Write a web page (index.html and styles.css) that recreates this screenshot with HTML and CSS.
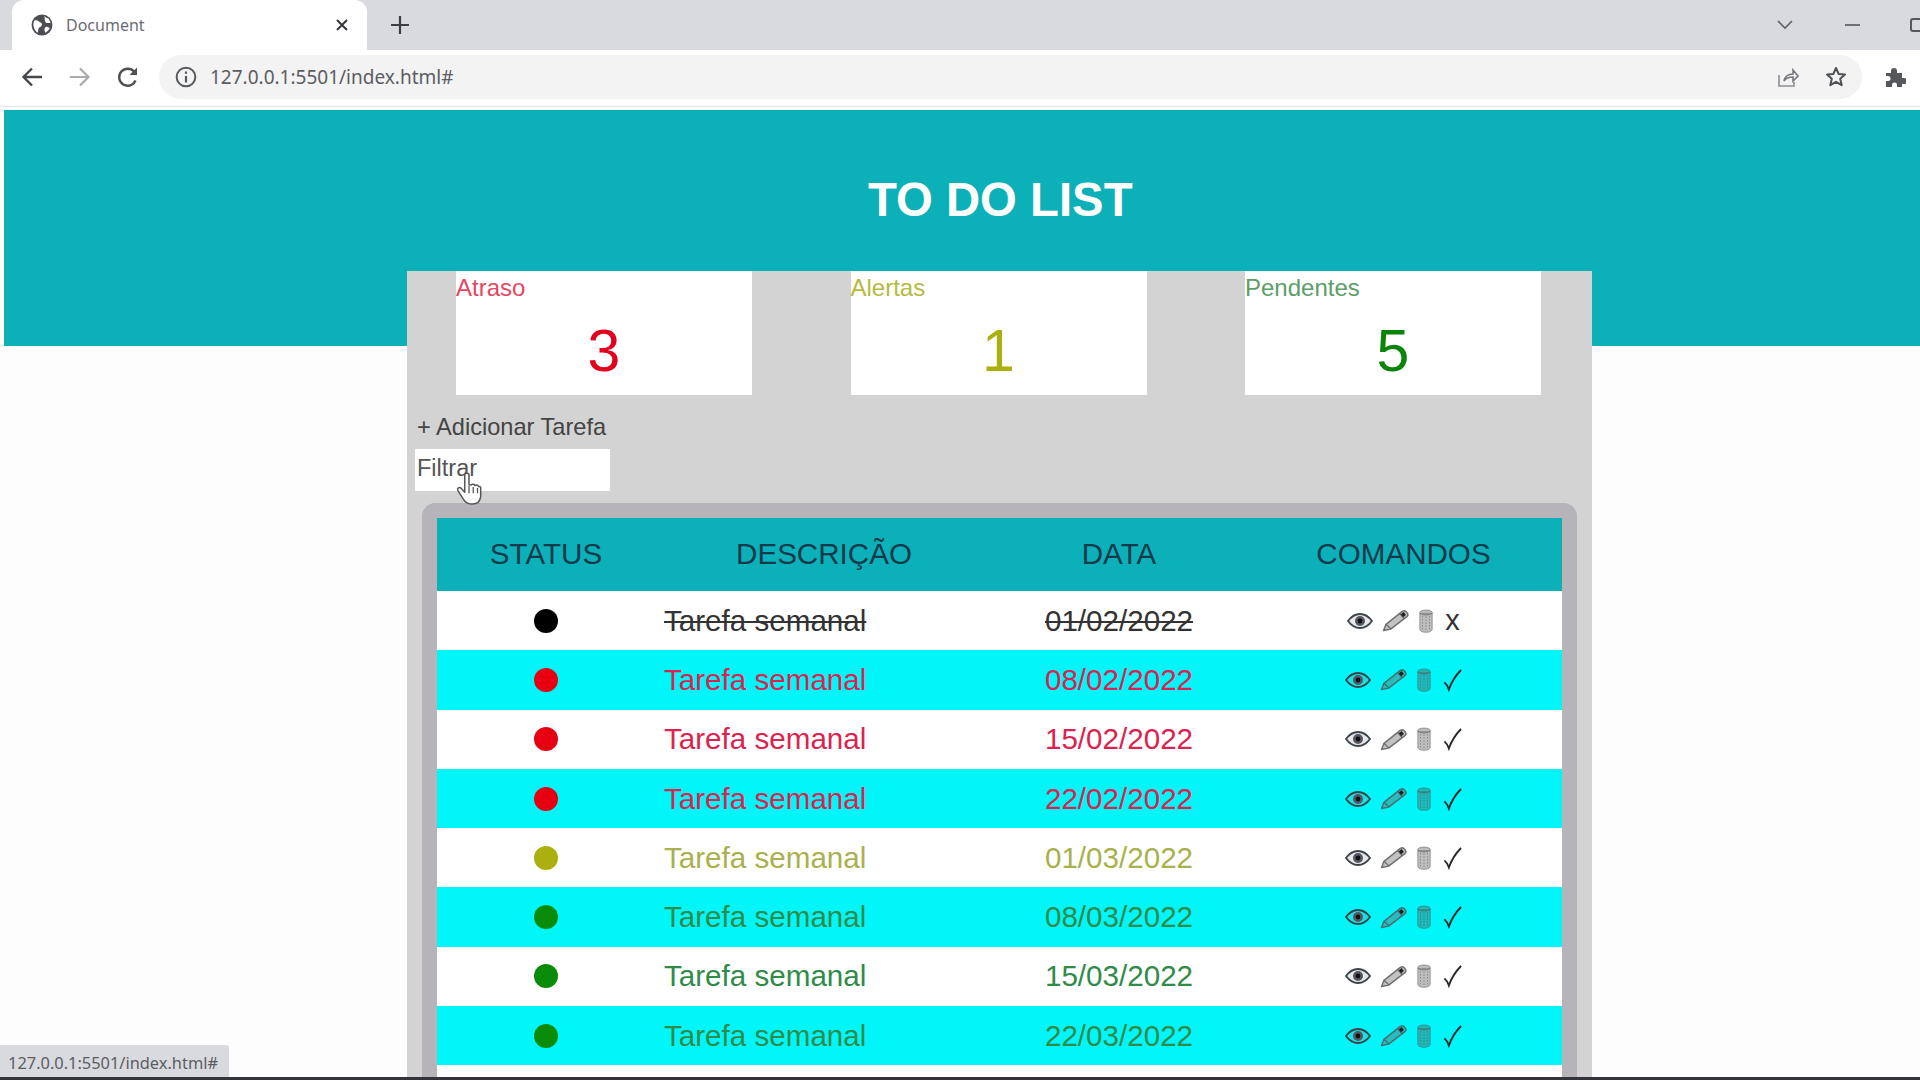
FILE: index.html
```
<!DOCTYPE html>
<html lang="pt-BR">
<head>
<meta charset="utf-8">
<title>Document</title>
<link rel="stylesheet" href="styles.css">
</head>
<body>
<svg class="defs" width="0" height="0" aria-hidden="true">
  <symbol id="i-eye" viewBox="0 0 26 16">
    <path d="M1 8C5 2.500 9 1 13 1s8 1.500 12 7c-4 5.500-8 7-12 7S5 13.500 1 8z" fill="#888" fill-opacity=".2" stroke="#3a4448" stroke-width="1.800"/>
    <circle cx="13" cy="8" r="5" fill="#556"/>
    <circle cx="13" cy="8" r="2.400" fill="#111"/>
  </symbol>
  <symbol id="i-pencil" viewBox="0 0 29 24">
    <path d="M1.500 22.500l2.500-6.500L21 2.500c1.500-1 3-.8 4 .2l1.500 1.800c.8 1.200.5 2.500-.6 3.500L9 21z" fill="#666" fill-opacity=".4" stroke="#555" stroke-opacity=".8" stroke-width="1.500" stroke-linejoin="round"/>
    <path d="M4.500 16.500L9 20.500M18.500 5l4.500 5" stroke="#444" stroke-opacity=".7" stroke-width="1.300" fill="none"/>
    <path d="M19.500 5.500l3-2.300 2.400 3-3 2.300z" fill="#222"/>
  </symbol>
  <symbol id="i-trash" viewBox="0 0 14 24">
    <ellipse cx="7" cy="3.500" rx="6.300" ry="2.500" fill="#555" fill-opacity=".4" stroke="#555" stroke-opacity=".5" stroke-width="1"/>
    <path d="M.8 4v16c0 2 2.500 3.300 6.200 3.300s6.200-1.300 6.200-3.300V4" fill="#555" fill-opacity=".38" stroke="#555" stroke-opacity=".5" stroke-width="1"/>
    <path d="M3.500 7v14M7 7.500V22M10.500 7v14" stroke="#555" stroke-opacity=".5" stroke-width="1" stroke-dasharray="1.500 1.500"/>
  </symbol>
  <symbol id="i-check" viewBox="0 0 20 24">
    <path d="M1.500 14.500c1.800 1.500 3.400 3.800 4.700 7.500C9 14 13.500 7 19 1.500" fill="none" stroke="#2a2a2a" stroke-width="2"/>
  </symbol>
</svg>

<div class="browser">
  <div class="tabstrip">
    <div class="tab">
      <svg class="favicon" viewBox="0 0 20 20"><circle cx="10" cy="10" r="9.500" fill="#4d4d55"/><path d="M3 6c3-1 4 1 6 2s1 3-1 4-1 3-2 5C3 15 1 10 3 6zM12 1.500c1 2 3 2 4 2.500l2 4c-2 0-4 1-5-1s0-3-1-5.500zM13 12c2-1 3 0 4 1-1 2-2 3-4 4-1-2-1-4 0-5z" fill="#fff"/></svg>
      <span class="tab-title">Document</span>
      <svg class="tab-close" viewBox="0 0 12 12"><path d="M1 1l10 10M11 1L1 11" stroke="#33363c" stroke-width="2"/></svg>
    </div>
    <svg class="new-tab" viewBox="0 0 18 18"><path d="M9 0v18M0 9h18" stroke="#3c4043" stroke-width="2.200"/></svg>
    <div class="window-controls">
      <svg class="tab-search" viewBox="0 0 16 10"><path d="M1 1l7 7 7-7" fill="none" stroke="#5f6368" stroke-width="1.600"/></svg>
      <span class="minimize"></span>
      <span class="restore"></span>
    </div>
  </div>
  <div class="toolbar">
    <svg class="nav" viewBox="0 0 24 24"><path d="M22 12H4M12 3.500L3.500 12l8.500 8.500" fill="none" stroke="#45484d" stroke-width="2.400"/></svg>
    <svg class="nav" viewBox="0 0 24 24"><path d="M2 12h18M12 3.500l8.500 8.500-8.500 8.500" fill="none" stroke="#a9abb0" stroke-width="2.200"/></svg>
    <svg class="nav" viewBox="0 0 24 24"><path d="M19.500 15.500A8.500 8.500 0 1 1 18 6.500" fill="none" stroke="#4c4f54" stroke-width="2.400"/><path d="M21 2.500v7.500h-7.500z" fill="#4c4f54"/></svg>
    <div class="omnibox">
      <svg class="info" viewBox="0 0 20 20"><circle cx="10" cy="10" r="8.500" fill="none" stroke="#55585d" stroke-width="1.800"/><path d="M10 9v6M10 5v2" stroke="#55585d" stroke-width="2"/></svg>
      <span class="url">127.0.0.1:5501/index.html#</span>
      <span class="omni-actions">
        <svg class="share" viewBox="0 0 22 22"><path d="M2 9v11h15v-4" fill="none" stroke="#8a8d92" stroke-width="1.600"/><path d="M7 15c1-5 4-7 9-7V4l5 6-5 5v-4c-4 0-7 1-9 4z" fill="none" stroke="#77797e" stroke-width="1.600"/></svg>
        <svg class="star" viewBox="0 0 22 22"><path d="M11 2l2.700 6 6.300.6-4.800 4.200 1.500 6.400L11 15.800l-5.700 3.400 1.500-6.400L2 8.600 8.300 8z" fill="none" stroke="#4d5055" stroke-width="2" stroke-linejoin="round"/></svg>
      </span>
    </div>
    <svg class="puzzle" viewBox="0 0 22 22"><path d="M2 7h5V5a3 3 0 0 1 6 0v2h5v5h2a3 3 0 0 1 0 6h-2v3H13v-2a2.500 2.500 0 0 0-5 0v2H2v-6h2a2.500 2.500 0 0 0 0-5H2z" fill="#55585d"/></svg>
  </div>
</div>

<header class="banner">
  <h1 class="title">TO DO LIST</h1>
</header>

<main class="panel">
  <section class="cards">
    <div class="card late">
      <span class="card-label">Atraso</span>
      <span class="card-value">3</span>
    </div>
    <div class="card alert">
      <span class="card-label">Alertas</span>
      <span class="card-value">1</span>
    </div>
    <div class="card pending">
      <span class="card-label">Pendentes</span>
      <span class="card-value">5</span>
    </div>
  </section>

  <a class="add-task" href="#">+ Adicionar Tarefa</a>
  <div class="filter">
    <span class="filter-text">Filtrar</span>
    <svg class="cursor" viewBox="0 0 24 32"><path d="M8 3c0-2.500 4-2.500 4 0v9l2 .2c1-1 3-.8 3.500.5 1-.8 3-.6 3.500 1 1.200-.4 2.500.4 2 2.500v7c-.5 4-3 7-7.500 7-5 0-7-1.500-9-5l-5-8c-1-2 1.500-3.500 3-2L8 19z" fill="#fff" stroke="#555" stroke-width="1.400" stroke-linejoin="round"/><path d="M12 13v7M16 14v6M20 15v5" stroke="#555" stroke-width="1.200"/></svg>
  </div>

  <div class="table-frame">
    <div class="table">
      <div class="row head">
        <div>STATUS</div>
        <div>DESCRIÇÃO</div>
        <div>DATA</div>
        <div>COMANDOS</div>
      </div>

      <div class="row done">
        <div><span class="dot"></span></div>
        <div class="desc">Tarefa semanal</div>
        <div class="date">01/02/2022</div>
        <div class="cmds"><svg class="eye"><use href="#i-eye"/></svg><svg class="pencil"><use href="#i-pencil"/></svg><svg class="trash"><use href="#i-trash"/></svg><span class="undo">x</span></div>
      </div>
      <div class="row late">
        <div><span class="dot"></span></div>
        <div class="desc">Tarefa semanal</div>
        <div class="date">08/02/2022</div>
        <div class="cmds"><svg class="eye"><use href="#i-eye"/></svg><svg class="pencil"><use href="#i-pencil"/></svg><svg class="trash"><use href="#i-trash"/></svg><svg class="check"><use href="#i-check"/></svg></div>
      </div>
      <div class="row late">
        <div><span class="dot"></span></div>
        <div class="desc">Tarefa semanal</div>
        <div class="date">15/02/2022</div>
        <div class="cmds"><svg class="eye"><use href="#i-eye"/></svg><svg class="pencil"><use href="#i-pencil"/></svg><svg class="trash"><use href="#i-trash"/></svg><svg class="check"><use href="#i-check"/></svg></div>
      </div>
      <div class="row late">
        <div><span class="dot"></span></div>
        <div class="desc">Tarefa semanal</div>
        <div class="date">22/02/2022</div>
        <div class="cmds"><svg class="eye"><use href="#i-eye"/></svg><svg class="pencil"><use href="#i-pencil"/></svg><svg class="trash"><use href="#i-trash"/></svg><svg class="check"><use href="#i-check"/></svg></div>
      </div>
      <div class="row alert">
        <div><span class="dot"></span></div>
        <div class="desc">Tarefa semanal</div>
        <div class="date">01/03/2022</div>
        <div class="cmds"><svg class="eye"><use href="#i-eye"/></svg><svg class="pencil"><use href="#i-pencil"/></svg><svg class="trash"><use href="#i-trash"/></svg><svg class="check"><use href="#i-check"/></svg></div>
      </div>
      <div class="row pending">
        <div><span class="dot"></span></div>
        <div class="desc">Tarefa semanal</div>
        <div class="date">08/03/2022</div>
        <div class="cmds"><svg class="eye"><use href="#i-eye"/></svg><svg class="pencil"><use href="#i-pencil"/></svg><svg class="trash"><use href="#i-trash"/></svg><svg class="check"><use href="#i-check"/></svg></div>
      </div>
      <div class="row pending">
        <div><span class="dot"></span></div>
        <div class="desc">Tarefa semanal</div>
        <div class="date">15/03/2022</div>
        <div class="cmds"><svg class="eye"><use href="#i-eye"/></svg><svg class="pencil"><use href="#i-pencil"/></svg><svg class="trash"><use href="#i-trash"/></svg><svg class="check"><use href="#i-check"/></svg></div>
      </div>
      <div class="row pending">
        <div><span class="dot"></span></div>
        <div class="desc">Tarefa semanal</div>
        <div class="date">22/03/2022</div>
        <div class="cmds"><svg class="eye"><use href="#i-eye"/></svg><svg class="pencil"><use href="#i-pencil"/></svg><svg class="trash"><use href="#i-trash"/></svg><svg class="check"><use href="#i-check"/></svg></div>
      </div>
      <div class="row blank"></div>
    </div>
  </div>
</main>

<div class="status-bubble">127.0.0.1:5501/index.html#</div>
<div class="screen-edge"></div>
</body>
</html>
```

FILE: styles.css
```
* { box-sizing: border-box; }

html, body {
  margin: 0;
  height: 1080px;
  overflow: hidden;
}

body {
  background: #fdfdfe;
  font-family: "Liberation Sans", Arial, sans-serif;
  color: #333;
}

.defs { position: absolute; }

/* browser chrome */
.browser { height: 109px; }

.tabstrip {
  height: 50px;
  background: #d9dade;
  display: flex;
  align-items: center;
  padding-left: 12px;
}

.tab {
  width: 355px;
  height: 50px;
  background: #fff;
  border-radius: 12px 12px 0 0;
  display: flex;
  align-items: center;
  padding: 0 19px 0 19px;
}

.favicon { width: 22px; height: 22px; margin-right: 13px; }

.tab-title {
  font-family: "Noto Sans", sans-serif;
  font-size: 16px;
  color: #6b6d75;
  flex: 1;
}

.tab-close { width: 12px; height: 12px; }

.new-tab { width: 18px; height: 18px; margin-left: 24px; }

.window-controls {
  margin-left: auto;
  display: flex;
  align-items: center;
}

.tab-search { width: 16px; height: 10px; margin-right: 52px; }

.minimize {
  width: 15px;
  height: 2px;
  background: #6e7177;
  margin-right: 50px;
}

.restore {
  width: 10px;
  height: 14px;
  border: 2px solid #55585d;
  border-right: 0;
  border-radius: 3px 0 0 3px;
}

.toolbar {
  height: 57px;
  background: #fff;
  display: flex;
  align-items: center;
  padding: 0 13px 3px 20px;
  border-bottom: 1px solid #e4e5ea;
}

.nav { width: 24px; height: 24px; margin-right: 24px; }
.nav:nth-child(3) { margin-right: 19px; }

.omnibox {
  width: 1703px;
  height: 44px;
  background: #f3f3f3;
  border-radius: 22px;
  display: flex;
  align-items: center;
  padding-left: 16px;
}

.info { width: 22px; height: 22px; margin-right: 13px; }

.url {
  font-family: "Noto Sans", sans-serif;
  font-size: 19px;
  color: #5b5d63;
}

.omni-actions {
  margin-left: auto;
  display: flex;
  align-items: center;
  gap: 26px;
  padding-right: 15px;
}

.share { width: 22px; height: 22px; }
.star { width: 22px; height: 22px; }

.puzzle { width: 22px; height: 22px; margin-left: 22px; }

/* banner */
.banner {
  margin: 1px 0 0 4px;
  height: 236px;
  background: #0cb0b8;
  padding-top: 62px;
}

.title {
  margin: 0;
  padding-left: 864px;
  color: #fff;
  font-size: 47.300px;
  line-height: 56px;
  font-weight: 700;
}

/* panel */
.panel {
  width: 1185px;
  height: 809px;
  margin: -75px 0 0 407px;
  background: #d3d3d3;
  overflow: hidden;
}

.cards {
  display: flex;
  gap: 98.500px;
  padding-left: 49px;
}

.card {
  width: 296px;
  height: 124px;
  background: #fff;
  display: flex;
  flex-direction: column;
  padding-top: 2px;
}

.card-label {
  font-size: 24px;
  line-height: 30px;
}

.card-value {
  text-align: center;
  font-size: 59px;
  line-height: 68px;
  margin-top: 14px;
}

.card.late .card-label { color: #e44763; }
.card.late .card-value { color: #e2001f; }
.card.alert .card-label { color: #b4bb40; }
.card.alert .card-value { color: #abaf10; }
.card.pending .card-label { color: #5c9e68; }
.card.pending .card-value { color: #0a850a; }

.add-task {
  display: block;
  margin: 18px 0 0 10px;
  height: 36px;
  font-size: 23.600px;
  line-height: 28px;
  color: #444;
  text-decoration: none;
}

.filter {
  position: relative;
  width: 195px;
  height: 42px;
  margin-left: 8px;
  background: #fff;
  font-size: 23.500px;
  line-height: 38px;
  color: #555;
  padding-left: 2px;
}

.cursor {
  position: absolute;
  left: 41px;
  top: 23px;
  width: 26px;
  height: 34px;
}

.table-frame {
  width: 1155px;
  margin: 12px 0 0 15px;
  border: 15px solid #b6b4b8;
  border-bottom: 0;
  border-radius: 14px 14px 0 0;
}

.table { display: flex; flex-direction: column; }

.row {
  display: grid;
  grid-template-columns: 218px 338px 252px 317px;
  align-items: center;
  height: 59.300px;
  background: #fff;
  font-size: 29.600px;
  text-align: center;
}

.row:nth-child(odd) { background: #00f6f8; }

.row.head {
  height: 73px;
  padding-bottom: 2px;
  background: #0cb0b8;
  color: #153a4c;
  font-size: 29.600px;
}

.row.blank { background: #fff; }

.desc { text-align: left; padding-left: 9px; }

.dot {
  display: block;
  width: 24px;
  height: 24px;
  border-radius: 50%;
  margin: 0 auto;
}

.row.done { color: #333; }
.row.done .desc, .row.done .date { text-decoration: line-through; }
.row.done .dot { background: #000; }

.row.late { color: #dc2350; }
.row.late .dot { background: #e60012; }

.row.alert { color: #a9b14e; }
.row.alert .dot { background: #abaf10; }

.row.pending { color: #2f8b4a; }
.row.pending .dot { background: #0a8c0a; }

.cmds {
  display: flex;
  align-items: center;
  justify-content: center;
}

.eye { width: 26px; height: 16px; margin-right: 9px; }
.pencil { width: 28px; height: 23px; margin-right: 9px; }
.trash { width: 14px; height: 24px; margin-right: 12px; }
.check { width: 19px; height: 24px; }
.undo { color: #333; line-height: 1; font-size: 29px; width: 15px; }

/* overlays */
.status-bubble {
  position: absolute;
  left: 0;
  top: 1045px;
  width: 229px;
  height: 32px;
  background: #d9dade;
  border-top-right-radius: 3px;
  padding-left: 8px;
  font-family: "Noto Sans", sans-serif;
  font-size: 16.400px;
  line-height: 36px;
  color: #5b5d63;
}

.screen-edge {
  position: absolute;
  left: 0;
  top: 1077px;
  width: 100%;
  height: 3px;
  background: #33333a;
}
```
